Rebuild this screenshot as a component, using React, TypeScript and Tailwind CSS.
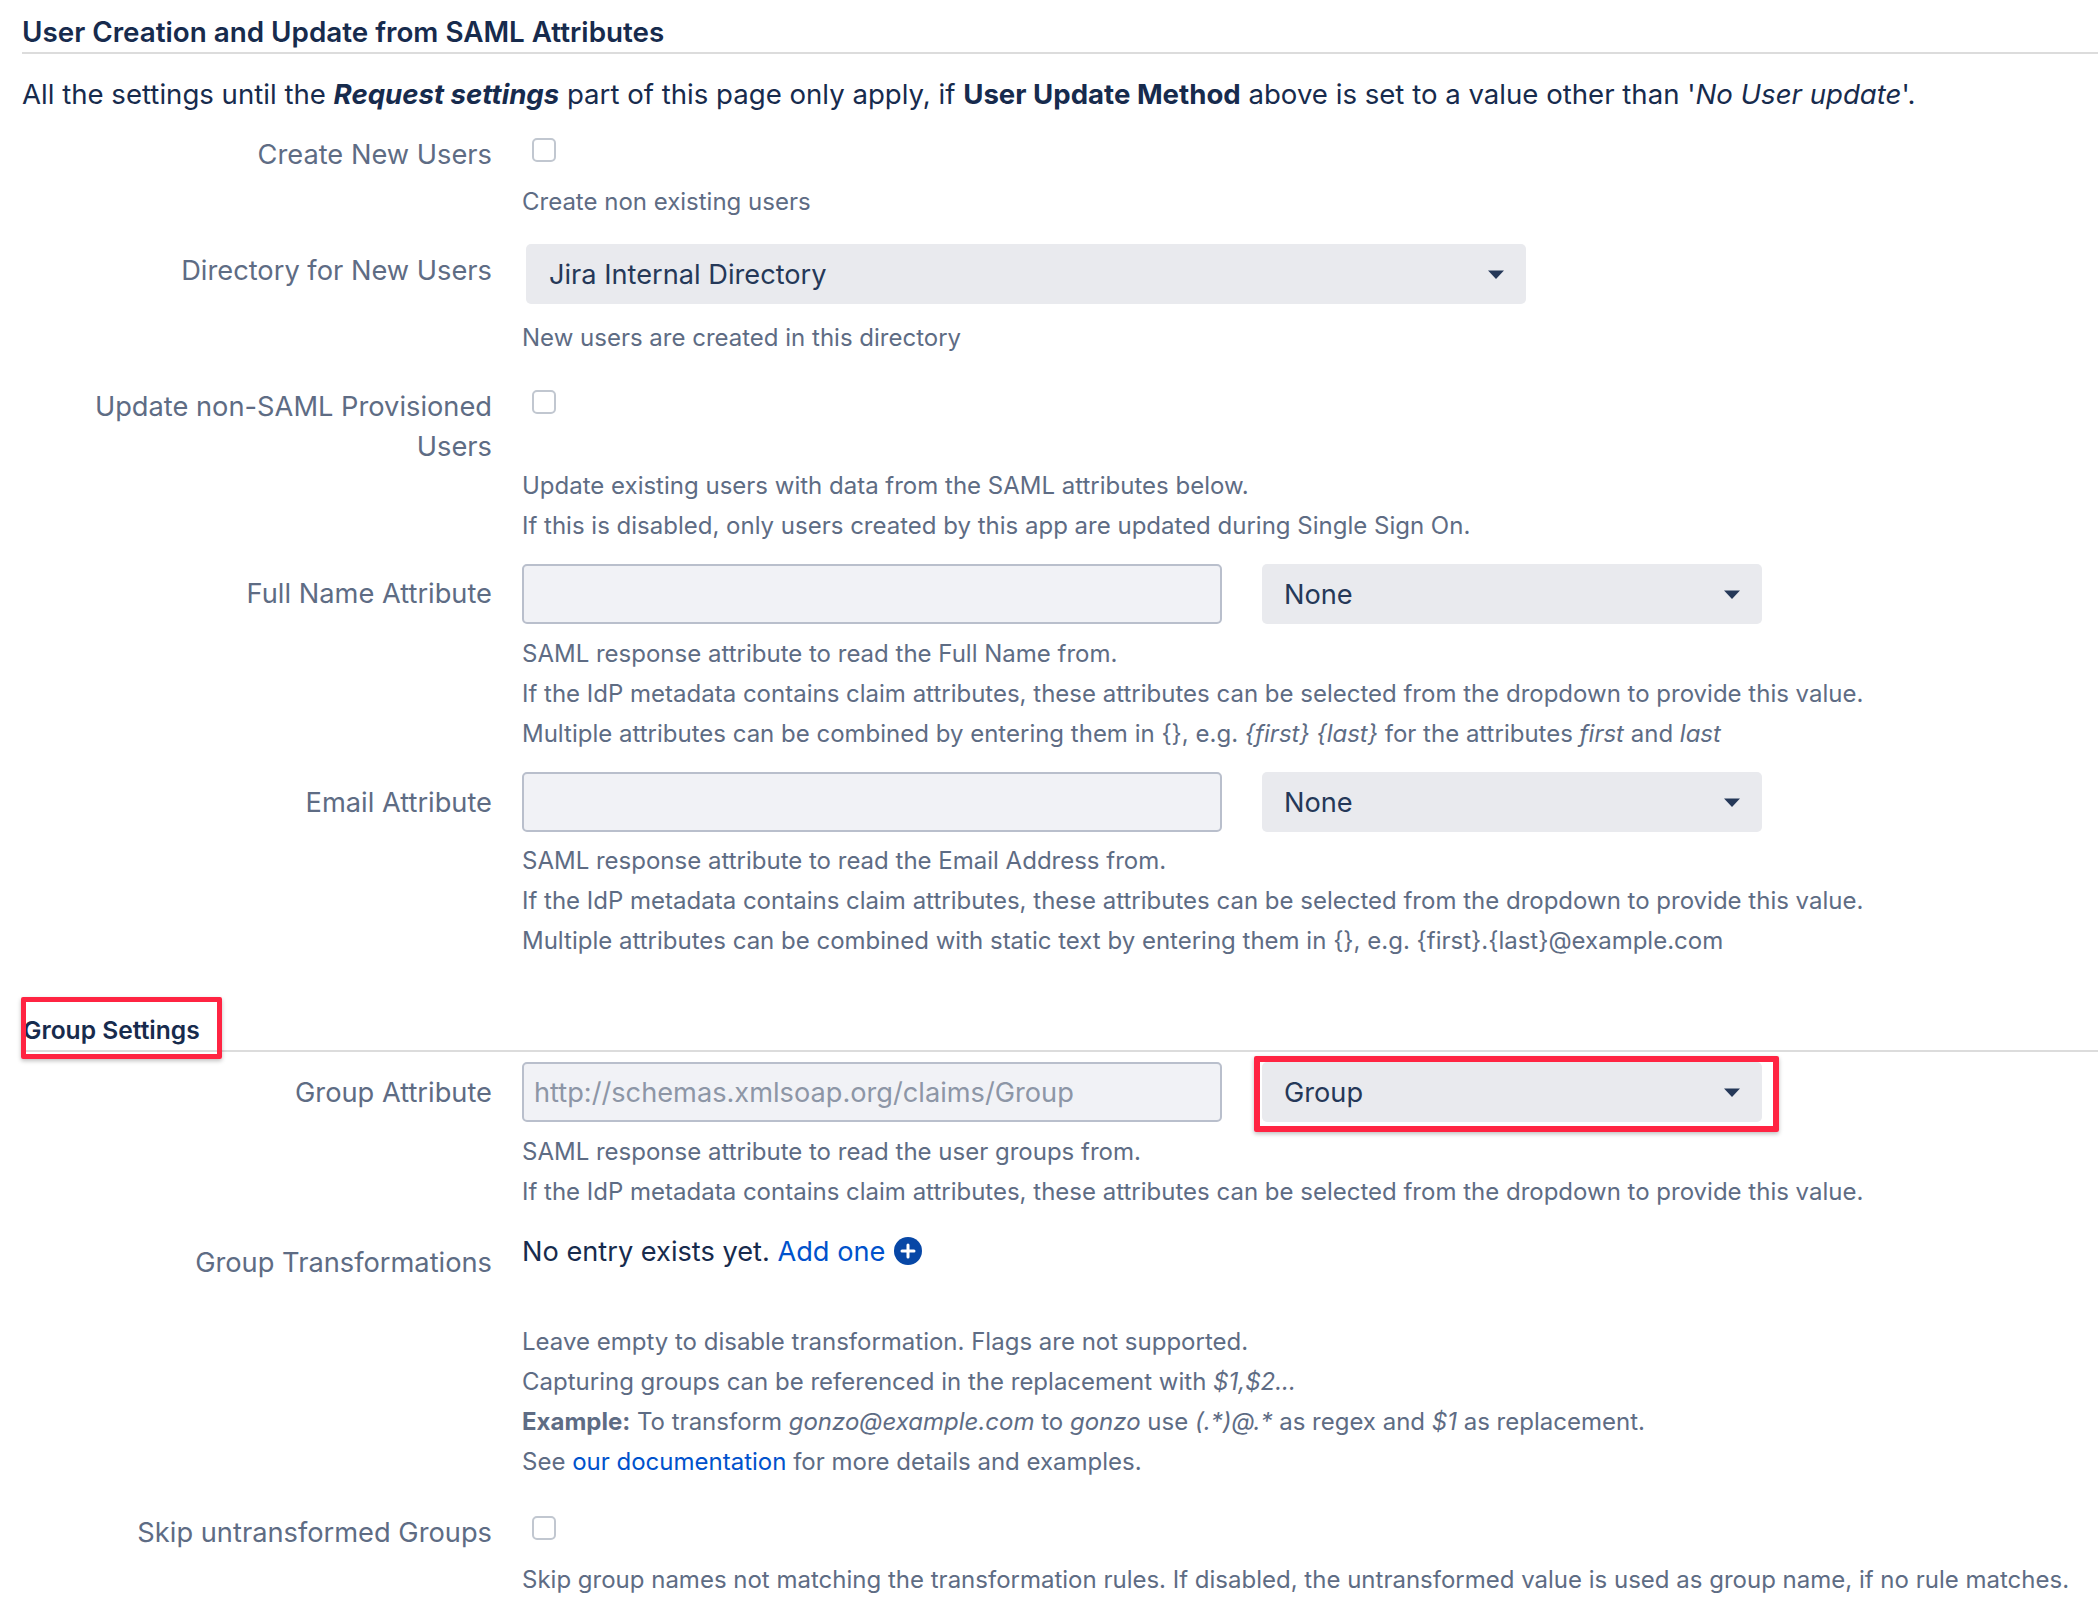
import type { ReactNode } from 'react';

function Caret() {
  return (
    <span className="mr-[22px] ml-auto">
      <svg width="16" height="9" viewBox="0 0 16 9" className="block">
        <path d="M0 0.5h16L8 9z" fill="#253858" />
      </svg>
    </span>
  );
}

function SelectBox({ value, width, inset }: { value: string; width: string; inset: string }) {
  return (
    <div className={`flex h-[60px] items-center rounded-[5px] bg-[#e9eaee] text-[27.2px] text-[#253858] ${inset} ${width}`}>
      <span className="pt-[2px]">{value}</span>
      <Caret />
    </div>
  );
}

function TextInput({ placeholder }: { placeholder?: string }) {
  return (
    <input
      readOnly
      placeholder={placeholder}
      className="h-[60px] w-[700px] rounded-[5px] border-2 border-[#b9bfcc] bg-[#f1f2f6] px-[10px] text-[27.2px] placeholder:text-[#8d96a6] outline-none"
    />
  );
}

function Checkbox() {
  return <span className="ml-[10px] block h-[24px] w-[24px] rounded-[5px] border-2 border-[#c1c7d0] bg-white" />;
}

function Help({ children }: { children: ReactNode }) {
  return <p className="text-[24px] leading-[40px] text-[#5e6c84]">{children}</p>;
}

function Row({ label, labelTop, className, children }: { label: string; labelTop: string; className: string; children: ReactNode }) {
  return (
    <div className={`flex ${className}`}>
      <label className={`w-[470px] shrink-0 text-right text-[27.25px] leading-[40px] text-[#5e6c84] ${labelTop}`}>{label}</label>
      <div className="ml-[30px] min-w-0 flex-1">{children}</div>
    </div>
  );
}

function InputPair({ value, placeholder }: { value: string; placeholder?: string }) {
  return (
    <div className="flex items-center gap-[40px]">
      <TextInput placeholder={placeholder} />
      <SelectBox value={value} width="w-[500px]" inset="pl-[22px]" />
    </div>
  );
}

export default function App() {
  return (
    <div className="h-[1614px] w-[2098px] overflow-hidden bg-white pl-[22px] font-['Inter',sans-serif]">
      <h2 className="flex h-[54px] items-end border-b-2 border-[#dcdcdc] text-[27.8px] leading-[40px] font-semibold text-[#172b4d]">
        User Creation and Update from SAML Attributes
      </h2>
      <p className="mt-[20px] text-[27.6px] leading-[40px] text-[#172b4d]">
        All the settings until the <b><i>Request settings</i></b> part of this page only apply, if <b>User Update Method</b> above is set to a value other than '<i>No User update</i>'.
      </p>

      <Row label="Create New Users" labelTop="mt-[-3px]" className="mt-[24px]">
        <Checkbox />
        <div className="mt-[20px]">
          <Help>Create non existing users</Help>
        </div>
      </Row>

      <Row label="Directory for New Users" labelTop="mt-[7px]" className="mt-[22px]">
        <div className="ml-[4px]">
          <SelectBox value="Jira Internal Directory" width="w-[1000px]" inset="pl-[23px]" />
        </div>
        <div className="mt-[14px]">
          <Help>New users are created in this directory</Help>
        </div>
      </Row>

      <Row label="Update non-SAML Provisioned Users" labelTop="mt-[0px]" className="mt-[29px]">
        <div className="pt-[3px]">
          <Checkbox />
        </div>
        <div className="mt-[52px]">
          <Help>Update existing users with data from the SAML attributes below.</Help>
          <Help>If this is disabled, only users created by this app are updated during Single Sign On.</Help>
        </div>
      </Row>

      <Row label="Full Name Attribute" labelTop="mt-[10px]" className="mt-[18px]">
        <InputPair value="None" />
        <div className="mt-[10px]">
          <Help>SAML response attribute to read the Full Name from.</Help>
          <Help>If the IdP metadata contains claim attributes, these attributes can be selected from the dropdown to provide this value.</Help>
          <Help>Multiple attributes can be combined by entering them in {'{}'}, e.g. <i>{'{first} {last}'}</i> for the attributes <i>first</i> and <i>last</i></Help>
        </div>
      </Row>

      <Row label="Email Attribute" labelTop="mt-[11px]" className="mt-[18px]">
        <InputPair value="None" />
        <div className="mt-[9px]">
          <Help>SAML response attribute to read the Email Address from.</Help>
          <Help>If the IdP metadata contains claim attributes, these attributes can be selected from the dropdown to provide this value.</Help>
          <Help>Multiple attributes can be combined with static text by entering them in {'{}'}, e.g. {'{first}.{last}@example.com'}</Help>
        </div>
      </Row>

      <div className="relative mt-[51px] flex h-[40px] items-end">
        <div className="flex h-full w-full items-center border-b-2 border-[#dcdcdc] pb-[2px] pl-[1px] text-[24.6px] leading-[32px] font-semibold text-[#172b4d]">
          Group Settings
        </div>
        <span className="absolute top-[-15px] left-[-1px] h-[62px] w-[201px] rounded-[2px] border-[5px] border-[#ff2442] shadow-[0_2px_4px_rgba(0,0,0,0.25)]" />
      </div>

      <Row label="Group Attribute" labelTop="mt-[11px]" className="mt-[10px]">
        <div className="relative">
          <InputPair value="Group" placeholder="http://schemas.xmlsoap.org/claims/Group" />
          <span className="absolute top-[-6px] left-[732px] h-[76px] w-[525px] rounded-[2px] border-[6px] border-[#ff2442] shadow-[0_2px_4px_rgba(0,0,0,0.25)]" />
        </div>
        <div className="mt-[10px]">
          <Help>SAML response attribute to read the user groups from.</Help>
          <Help>If the IdP metadata contains claim attributes, these attributes can be selected from the dropdown to provide this value.</Help>
        </div>
      </Row>

      <Row label="Group Transformations" labelTop="mt-[11px]" className="mt-[20px]">
        <div className="flex h-[40px] items-center text-[27.2px] text-[#172b4d]">
          No entry exists yet.&nbsp;<a className="text-[#0052cc]">Add one</a>
          <svg width="28" height="28" viewBox="0 0 28 28" className="mt-[-3px] ml-[9px]">
            <circle cx="14" cy="14" r="14" fill="#0747a6" />
            <path d="M14 8v12M8 14h12" stroke="#fff" strokeWidth="3" strokeLinecap="round" />
          </svg>
        </div>
        <div className="mt-[50px]">
          <Help>Leave empty to disable transformation. Flags are not supported.</Help>
          <Help>Capturing groups can be referenced in the replacement with <i>$1,$2...</i></Help>
          <Help><b>Example:</b> To transform <i>gonzo@example.com</i> to <i>gonzo</i> use <i>(.*)@.*</i> as regex and <i>$1</i> as replacement.</Help>
          <Help>See <a className="text-[#0052cc]">our documentation</a> for more details and examples.</Help>
        </div>
      </Row>

      <Row label="Skip untransformed Groups" labelTop="mt-[0px]" className="mt-[31px]">
        <div className="pt-[3px]">
          <Checkbox />
        </div>
        <div className="mt-[20px]">
          <Help>Skip group names not matching the transformation rules. If disabled, the untransformed value is used as group name, if no rule matches.</Help>
        </div>
      </Row>
    </div>
  );
}
